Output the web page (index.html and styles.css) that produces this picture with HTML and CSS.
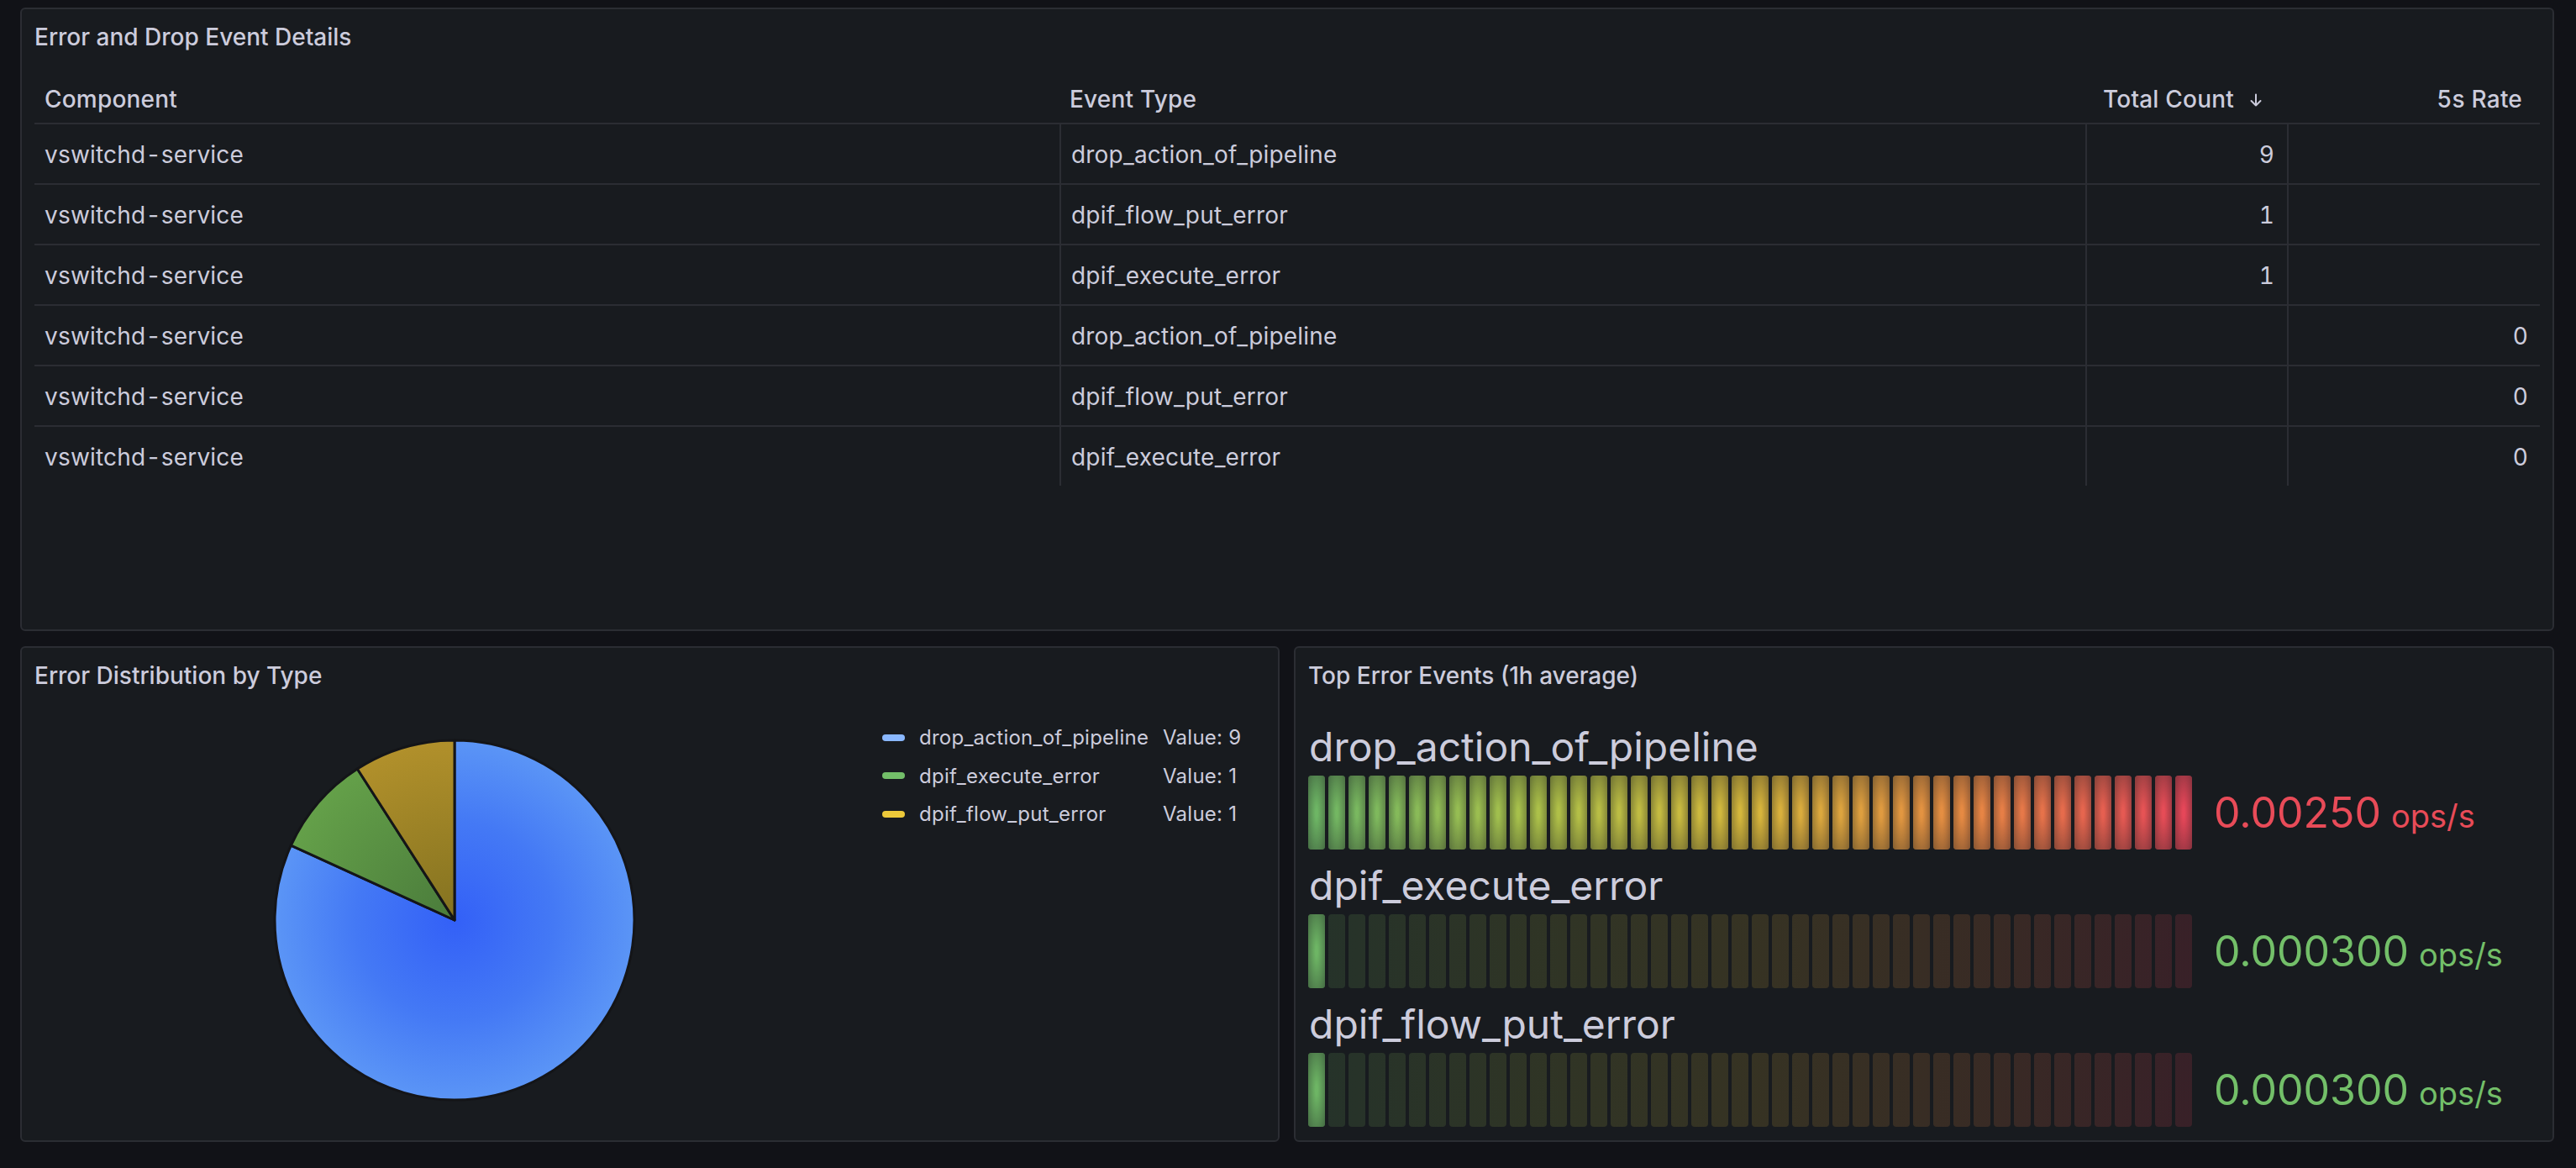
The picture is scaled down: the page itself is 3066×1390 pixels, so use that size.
FILE: index.html
```html
<!DOCTYPE html>
<html lang="en">
<head>
<meta charset="utf-8">
<title>Error and Drop Events</title>
<link rel="stylesheet" href="styles.css">
</head>
<body>
<div class="dashboard">
  <section class="panel panel-table">
    <header class="panel-header"><h2 class="panel-title">Error and Drop Event Details</h2></header>
    <div class="panel-content table-content">
      <table class="data-table">
        <colgroup>
          <col class="col-comp"><col class="col-type"><col class="col-count"><col class="col-rate">
        </colgroup>
        <thead>
          <tr>
            <th>Component</th>
            <th>Event Type</th>
            <th class="num th-count"><span class="th-inner">Total Count <svg class="sort-icon" width="20" height="20" viewBox="0 0 20 20"><path d="M10 3.5v13M4.5 11l5.5 5.5 5.5-5.5" fill="none" stroke="#ccccdc" stroke-width="2" stroke-linecap="round" stroke-linejoin="round"/></svg></span></th>
            <th class="num th-rate">5s Rate</th>
          </tr>
        </thead>
        <tbody>
          <tr><td>vswitchd-service</td><td>drop_action_of_pipeline</td><td class="num">9</td><td class="num rate"></td></tr>
          <tr><td>vswitchd-service</td><td>dpif_flow_put_error</td><td class="num">1</td><td class="num rate"></td></tr>
          <tr><td>vswitchd-service</td><td>dpif_execute_error</td><td class="num">1</td><td class="num rate"></td></tr>
          <tr><td>vswitchd-service</td><td>drop_action_of_pipeline</td><td class="num"></td><td class="num rate">0</td></tr>
          <tr><td>vswitchd-service</td><td>dpif_flow_put_error</td><td class="num"></td><td class="num rate">0</td></tr>
          <tr><td>vswitchd-service</td><td>dpif_execute_error</td><td class="num"></td><td class="num rate">0</td></tr>
        </tbody>
      </table>
    </div>
  </section>

  <div class="bottom-row">
    <section class="panel">
      <header class="panel-header"><h2 class="panel-title">Error Distribution by Type</h2></header>
      <div class="panel-content pie-content">
        <div class="pie-area">
          <svg class="pie" width="1000" height="493" viewBox="0 0 1000 493">
            <defs>
              <radialGradient id="pieBlue" gradientUnits="userSpaceOnUse" cx="500" cy="246" r="214">
                <stop offset="0" stop-color="#3360f7"/>
                <stop offset="0.55" stop-color="#4479f5"/>
                <stop offset="1" stop-color="#5b95f6"/>
              </radialGradient>
              <radialGradient id="pieGreen" gradientUnits="userSpaceOnUse" cx="500" cy="246" r="214">
                <stop offset="0" stop-color="#4a7b3b"/>
                <stop offset="1" stop-color="#64a049"/>
              </radialGradient>
              <radialGradient id="pieYellow" gradientUnits="userSpaceOnUse" cx="500" cy="246" r="214">
                <stop offset="0" stop-color="#837220"/>
                <stop offset="1" stop-color="#b1902b"/>
              </radialGradient>
            </defs>
            <path d="M500 246 L500 32 A214 214 0 1 1 305.34 157.1 Z" fill="url(#pieBlue)" stroke="#141518" stroke-width="3" stroke-linejoin="round"/>
            <path d="M500 246 L305.34 157.1 A214 214 0 0 1 384.3 65.96 Z" fill="url(#pieGreen)" stroke="#141518" stroke-width="3" stroke-linejoin="round"/>
            <path d="M500 246 L384.3 65.96 A214 214 0 0 1 500 32 Z" fill="url(#pieYellow)" stroke="#141518" stroke-width="3" stroke-linejoin="round"/>
          </svg>
        </div>
        <ul class="legend">
          <li class="legend-item"><span class="legend-mark mark-blue"></span><span class="legend-name">drop_action_of_pipeline</span><span class="legend-value">Value: 9</span></li>
          <li class="legend-item"><span class="legend-mark mark-green"></span><span class="legend-name">dpif_execute_error</span><span class="legend-value">Value: 1</span></li>
          <li class="legend-item"><span class="legend-mark mark-yellow"></span><span class="legend-name">dpif_flow_put_error</span><span class="legend-value">Value: 1</span></li>
        </ul>
      </div>
    </section>

    <section class="panel">
      <header class="panel-header"><h2 class="panel-title">Top Error Events (1h average)</h2></header>
      <div class="panel-content gauge-content">
        <div class="gauge-row">
          <div class="gauge-name">drop_action_of_pipeline</div>
          <div class="gauge-body">
            <svg class="lcd" width="1052" height="88" viewBox="0 0 1052 88">
              <defs>
                <linearGradient id="grylrd" gradientUnits="userSpaceOnUse" x1="10" y1="0" x2="1042" y2="0">
                  <stop offset="0" stop-color="#73bf69"/>
                  <stop offset="0.25" stop-color="#b4cb4c"/>
                  <stop offset="0.5" stop-color="#e2c03d"/>
                  <stop offset="0.75" stop-color="#f39045"/>
                  <stop offset="1" stop-color="#f2495c"/>
                </linearGradient>
                <radialGradient id="cellGlow" cx="0.5" cy="0.5" r="0.707">
                  <stop offset="0.1" stop-color="#181b1f" stop-opacity="0.06"/>
                  <stop offset="1" stop-color="#181b1f" stop-opacity="0.5"/>
                </radialGradient>
                <pattern id="cellMaskPat" width="24" height="88" patternUnits="userSpaceOnUse">
                  <rect width="20" height="88" rx="4" fill="#fff"/>
                </pattern>
                <pattern id="cellGlowPat" width="24" height="88" patternUnits="userSpaceOnUse">
                  <rect width="20" height="88" rx="4" fill="url(#cellGlow)"/>
                </pattern>
                <mask id="cellMask" maskUnits="userSpaceOnUse" x="0" y="0" width="1052" height="88">
                  <rect width="1052" height="88" fill="url(#cellMaskPat)"/>
                </mask>
              </defs>
              <g mask="url(#cellMask)">
                <rect width="1052" height="88" fill="url(#grylrd)"/>
                <rect width="1052" height="88" fill="url(#cellGlowPat)"/>
              </g>
            </svg>
            <div class="gauge-value val-red">0.00250<span class="unit">ops/s</span></div>
          </div>
        </div>

        <div class="gauge-row">
          <div class="gauge-name">dpif_execute_error</div>
          <div class="gauge-body">
            <svg class="lcd" width="1052" height="88" viewBox="0 0 1052 88">
              <g mask="url(#cellMask)">
                <rect width="1052" height="88" fill="url(#grylrd)" opacity="0.15"/>
              </g>
              <rect width="20" height="88" rx="4" fill="#73bf69"/>
              <rect width="20" height="88" rx="4" fill="url(#cellGlow)"/>
            </svg>
            <div class="gauge-value val-green">0.000300<span class="unit">ops/s</span></div>
          </div>
        </div>

        <div class="gauge-row">
          <div class="gauge-name">dpif_flow_put_error</div>
          <div class="gauge-body">
            <svg class="lcd" width="1052" height="88" viewBox="0 0 1052 88">
              <g mask="url(#cellMask)">
                <rect width="1052" height="88" fill="url(#grylrd)" opacity="0.15"/>
              </g>
              <rect width="20" height="88" rx="4" fill="#73bf69"/>
              <rect width="20" height="88" rx="4" fill="url(#cellGlow)"/>
            </svg>
            <div class="gauge-value val-green">0.000300<span class="unit">ops/s</span></div>
          </div>
        </div>
      </div>
    </section>
  </div>
</div>
</body>
</html>
```

FILE: styles.css
```css
* {
  box-sizing: border-box;
}

html,
body {
  margin: 0;
  padding: 0;
  background: #111217;
}

body {
  width: 3066px;
  height: 1390px;
  overflow: hidden;
  font-family: Inter, "Noto Sans", "Liberation Sans", sans-serif;
  color: #ccccdc;
}

.dashboard {
  display: flex;
  flex-direction: column;
  gap: 18px;
  padding: 9px 26px 0 24px;
}

.panel {
  display: flex;
  flex-direction: column;
  background: #181b1f;
  border: 2px solid #2b2d33;
  border-radius: 6px;
  overflow: hidden;
}

.panel-table {
  height: 742px;
}

.bottom-row {
  display: grid;
  grid-template-columns: 1499px 1500px;
  gap: 17px;
  height: 590px;
}

.panel-header {
  height: 62px;
  flex: none;
  display: flex;
  align-items: center;
  padding: 4px 15px 0;
}

.panel-title {
  margin: 0;
  font-size: 28px;
  font-weight: 500;
  line-height: 1;
  color: #ccccdc;
}

.panel-content {
  flex: 1;
  min-height: 0;
}

/* ---------- table ---------- */
.table-content {
  padding: 16px 15px 0;
}

.data-table {
  width: 2982px;
  table-layout: fixed;
  border-collapse: separate;
  border-spacing: 0;
  font-size: 28px;
  letter-spacing: 0.2px;
  font-variant-numeric: tabular-nums;
}

.col-comp { width: 1220px; }
.col-type { width: 1221px; }
.col-count { width: 240px; }
.col-rate { width: 301px; }

.data-table th,
.data-table td {
  box-sizing: content-box;
  padding: 0 12px;
  text-align: left;
  vertical-align: middle;
  white-space: nowrap;
  line-height: 1.2;
}

.data-table th {
  height: 55px;
  padding-top: 2px;
  font-weight: 500;
  border-bottom: 2px solid #2b2d33;
}

.data-table td {
  height: 67px;
  padding-top: 3px;
  font-weight: 400;
  border-bottom: 2px solid #2b2d33;
}

.data-table tbody tr:last-child td {
  border-bottom: none;
}

.data-table td + td {
  border-left: 2px solid #2b2d33;
}

.data-table .num {
  text-align: right;
  padding-right: 15px;
}

.data-table td.rate {
  padding-right: 14px;
}

.data-table th.th-count {
  padding-right: 27px;
}

.data-table th.th-rate {
  padding-right: 21px;
}

.th-inner {
  display: inline-flex;
  align-items: center;
  gap: 16px;
}

.sort-icon {
  display: block;
}

/* ---------- pie ---------- */
.pie-content {
  display: flex;
  padding: 16px 15px 15px;
}

.pie-area {
  width: 1000px;
  flex: none;
}

.pie {
  display: block;
}

.legend {
  list-style: none;
  margin: 0;
  padding: 6px 0 0 9px;
  font-size: 24px;
  letter-spacing: 0.25px;
}

.legend-item {
  display: flex;
  align-items: center;
  height: 45.5px;
}

.legend-mark {
  width: 27px;
  height: 8px;
  border-radius: 4px;
  margin-right: 17px;
  flex: none;
}

.mark-blue { background: #8ab8ff; }
.mark-green { background: #73bf69; }
.mark-yellow { background: #ecc93a; }

.legend-name {
  width: 290px;
  flex: none;
}

.legend-value {
  white-space: nowrap;
}

/* ---------- bar gauges ---------- */
.gauge-content {
  display: flex;
  flex-direction: column;
  gap: 4px;
  padding: 17px 16px 15px;
}

.gauge-name {
  height: 73px;
  padding-top: 4px;
  font-size: 48px;
  line-height: 69px;
  white-space: nowrap;
}

.gauge-body {
  display: flex;
  align-items: center;
  height: 88px;
}

.lcd {
  display: block;
  flex: none;
  margin-left: -1px;
}

.gauge-value {
  margin-left: 26px;
  font-size: 50px;
  line-height: 1;
  white-space: nowrap;
}

.gauge-value .unit {
  font-size: 38px;
  margin-left: 12px;
}

.val-red { color: #e84b58; }
.val-green { color: #73bf69; }
```
